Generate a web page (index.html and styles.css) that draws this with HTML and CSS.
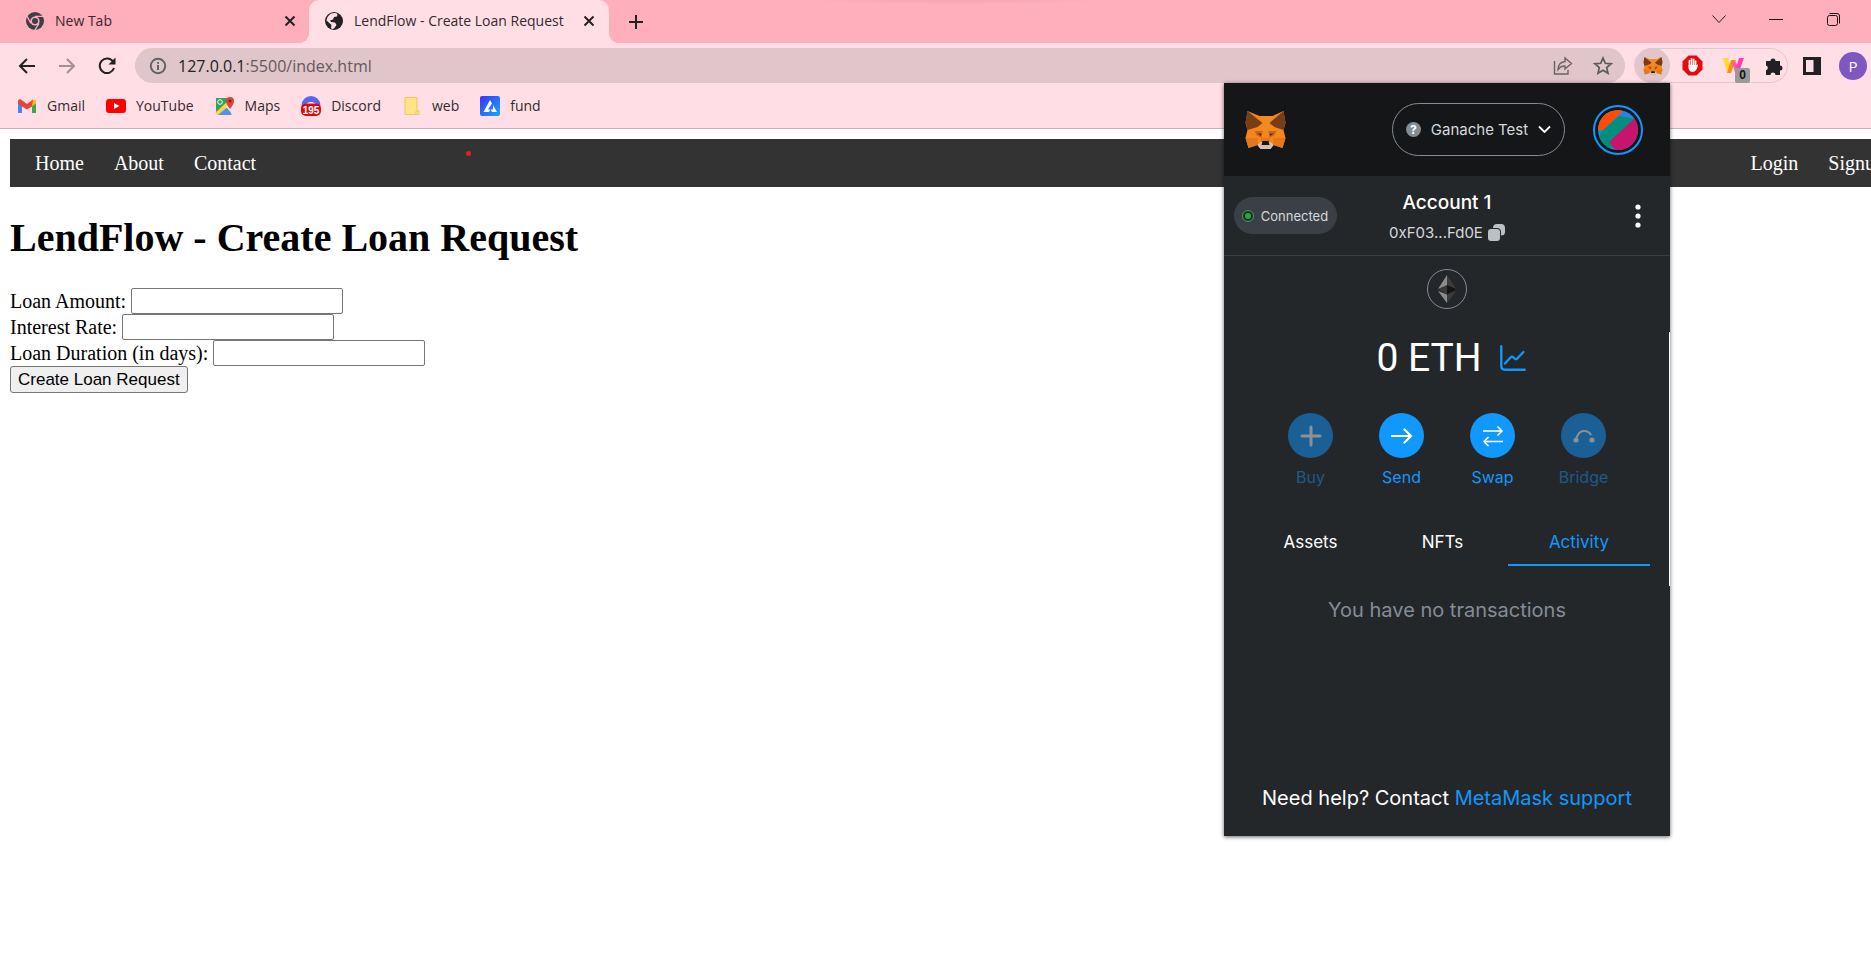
FILE: index.html
```html
<!DOCTYPE html>
<html lang="en">
<head>
<meta charset="utf-8">
<title>LendFlow - Create Loan Request</title>
<link rel="stylesheet" href="styles.css">
</head>
<body>
<svg class="defs" aria-hidden="true">
  <symbol id="fox" viewBox="0 0 40 38">
    <path d="M2 0 L14 5 H27 L38 0 L40 12 L38 19 L40 27 L37 37 L28 34 L25 38 H15 L12 34 L3 37 L0 27 L2 19 L0 12Z" fill="#f6851b"/>
    <path d="M2 0 L17 12 L12 16 L2 19 L0 11Z M38 0 L24 12 L29 16 L38 19 L40 11Z" fill="#763d16"/>
    <path d="M14 5 L17 12 L16 20 H24 L24 12 L27 5Z" fill="#f08a24"/>
    <path d="M9 20 L17 20 L16 27 L11 24Z M31 20 L23 20 L24 27 L29 24Z" fill="#cd6116"/>
    <path d="M0 27 H12 L12 34 L3 37Z M40 27 H28 V34 L37 37Z M16 27 H24 L25 33 H15Z" fill="#e4761b"/>
    <path d="M12 22 L16 23 L15 25Z M28 22 L24 23 L25 25Z" fill="#233447"/>
    <path d="M12 34 L15 31 H25 L28 34 L25 38 H15Z" fill="#d5bfb2"/>
    <path d="M17 30 H23 L24 34 H16Z" fill="#161616"/>
  </symbol>
  <symbol id="cross" viewBox="0 0 12 12"><path d="M1.5 1.5 L10.500 10.500 M10.500 1.500 L1.500 10.500" stroke="#222" stroke-width="2" fill="none"/></symbol>
</svg>

<header class="browser">
  <div class="tabstrip">
    <div class="tab">
      <svg class="favicon" viewBox="0 0 20 20"><circle cx="10" cy="10" r="9" fill="#3c4043"/><circle cx="10" cy="10" r="4.600" fill="#ffaebc"/><circle cx="10" cy="10" r="3" fill="#3c4043"/><path d="M10 5.400 H18.500 M6 12.300 L1.800 5 M14 12.300 L9.600 19.500" stroke="#ffaebc" stroke-width="1.400"/></svg>
      <span class="tab-title">New Tab</span>
      <button class="plain" aria-label="Close tab"><svg class="x"><use href="#cross"/></svg></button>
    </div>
    <div class="tab active">
      <svg class="favicon" viewBox="0 0 20 20"><circle cx="10" cy="10" r="9" fill="#202124"/><path d="M7 2.500 Q12 1.500 13.500 3 L13 5.500 L10 6 L9 8.500 L6 9.500 L7 11 L11 11.500 L12.500 14 L10 17.500 Q8 18.500 7 17 L7.500 14 L2.500 9.500 Q3 5 7 2.500Z" fill="#ffdfe5"/></svg>
      <span class="tab-title">LendFlow - Create Loan Request</span>
      <button class="plain" aria-label="Close tab"><svg class="x"><use href="#cross"/></svg></button>
    </div>
    <button class="plain new-tab" aria-label="New tab"><svg width="16" height="16" viewBox="0 0 16 16"><path d="M8 1 V15 M1 8 H15" stroke="#222" stroke-width="2"/></svg></button>
    <div class="window-controls">
      <button class="plain" aria-label="Search tabs"><svg width="16" height="16" viewBox="0 0 16 16"><path d="M1.500 4.500 L8 11.500 L14.500 4.500" fill="none" stroke="#222"/></svg></button>
      <button class="plain" aria-label="Minimize"><svg width="16" height="16" viewBox="0 0 16 16"><path d="M1 8.500 H15" stroke="#111"/></svg></button>
      <button class="plain" aria-label="Restore"><svg width="16" height="16" viewBox="0 0 16 16" fill="none" stroke="#111"><rect x="2.500" y="4.500" width="10" height="10" rx="2"/><path d="M4.500 2.500 H12 Q14.500 2.500 14.500 5 V12.500"/></svg></button>
    </div>
  </div>

  <div class="toolbar">
    <div class="nav-buttons">
      <button class="plain" aria-label="Back"><svg width="18" height="18" viewBox="0 0 18 18"><path d="M17 9 H2 M9 2 L2 9 L9 16" fill="none" stroke="#222" stroke-width="2"/></svg></button>
      <button class="plain" aria-label="Forward"><svg width="18" height="18" viewBox="0 0 18 18"><path d="M1 9 H16 M9 2 L16 9 L9 16" fill="none" stroke="#a38f94" stroke-width="2"/></svg></button>
      <button class="plain" aria-label="Reload"><svg width="18" height="18" viewBox="0 0 18 18"><path d="M15 4.500 A7.300 7.300 0 1 0 16 11" fill="none" stroke="#222" stroke-width="2"/><path d="M17.500 0.500 V7.500 H10.500Z" fill="#222"/></svg></button>
    </div>
    <div class="omnibox">
      <svg width="18" height="18" viewBox="0 0 18 18" fill="none" stroke="#5f6368" stroke-width="2"><circle cx="9" cy="9" r="7.200"/><path d="M9 8 V13 M9 5 V6.800"/></svg>
      <span class="url"><b>127.0.0.1</b>:5500/index.html</span>
      <button class="plain" aria-label="Share"><svg width="20" height="20" viewBox="0 0 20 20" fill="none" stroke="#6b6266" stroke-width="1.400"><path d="M1.500 5 V18 H15 V14"/><path d="M12 2 L18.500 7.500 L12 13 V10 Q8 9.500 5 13.500 Q5.500 6 12 5.500Z"/></svg></button>
      <button class="plain" aria-label="Bookmark"><svg width="20" height="20" viewBox="0 0 20 20"><path d="M10 2 L12.300 7.300 L18 7.800 L13.700 11.600 L15 17.200 L10 14.200 L5 17.200 L6.300 11.600 L2 7.800 L7.700 7.300Z" fill="none" stroke="#5f5a5e" stroke-width="1.700"/></svg></button>
    </div>
    <div class="extensions">
      <button class="plain ext-fox" aria-label="MetaMask"><svg width="20" height="18"><use href="#fox"/></svg></button>
      <button class="plain" aria-label="Ad blocker"><svg width="21" height="21" viewBox="0 0 21 21"><path d="M6.500 .5 H14.500 L20.500 6.500 V14.500 L14.500 20.500 H6.500 L.5 14.500 V6.500Z" fill="#e9090c"/><path d="M7.400 12 V5.500 M9.500 11 V3.800 M11.600 11 V4.200 M13.600 12 V6" stroke="#fff" stroke-width="1.600" stroke-linecap="round"/><path d="M6.600 10 H14.400 L16 9.500 Q15 16.500 11 17 Q7 17 6.600 13Z" fill="#fff"/></svg></button>
      <button class="plain badge-host" aria-label="Wappalyzer"><svg width="21" height="17" viewBox="0 0 21 17"><path d="M0 1 H5 L8 12 L4 15Z" fill="#ffdd22"/><path d="M8 3 H13 L8 16 H4Z" fill="#ff8c1a"/><path d="M9 5 H13 L16 15 H12Z" fill="#ff5ca8"/><path d="M16 1 H21 L16 15 H12Z" fill="#ff3fae"/></svg><span class="badge">0</span></button>
      <button class="plain" aria-label="Extensions"><svg width="20" height="20" viewBox="0 0 20 20"><path d="M2 5 H6.500 A2.500 2.500 0 1 1 11.500 5 H16 V9.500 A2.500 2.500 0 1 1 16 14.500 V19 H11.500 A2.500 2.500 0 0 0 6.500 19 H2 V14.300 A2.500 2.500 0 0 0 2 9.500Z" fill="#202124"/></svg></button>
    </div>
    <button class="plain" aria-label="Side panel"><svg width="18" height="18" viewBox="0 0 18 18"><path d="M0 0 H18 V18 H0Z M3 3 V15 H10.500 V3Z" fill="#202124" fill-rule="evenodd"/></svg></button>
    <button class="plain profile">P</button>
  </div>

  <nav class="bookmarks" aria-label="Bookmarks">
    <a href="#"><svg width="20" height="20" viewBox="0 0 20 20"><path d="M1 4 V17 H5 V9Z" fill="#4285f4"/><path d="M19 4 V17 H15 V9Z" fill="#34a853"/><path d="M15 5 L19 3.500 V7.500 L15 10.500Z" fill="#fbbc04"/><path d="M1 5 Q1.500 2.500 4 3.500 L10 8 L16 3.500 L15 10.500 L10 13.500 L5 10.500 L1 7.500Z" fill="#ea4335"/></svg>Gmail</a>
    <a href="#"><svg width="20" height="20" viewBox="0 0 20 20"><rect y="3" width="20" height="14" rx="3" fill="#f00"/><path d="M8 7 L13.500 10 L8 13Z" fill="#fff"/></svg>YouTube</a>
    <a href="#"><svg width="20" height="20" viewBox="0 0 20 20"><path d="M1 2 H13 L16 18 H1Z" fill="#34a05a"/><path d="M2 19 L10 11 L17 19Z" fill="#5b8def"/><path d="M0 17 L14 4 L16 8 L3 19Z" fill="#f6d44c"/><path d="M10 10 L17 18 V9Z" fill="#dfe3e8"/><circle cx="5" cy="6" r="2.300" fill="none" stroke="#fff"/><path d="M15 13 Q11 8 11 5 A4 4 0 0 1 19 5 Q19 8 15 13Z" fill="#dc4437"/><circle cx="15" cy="5" r="1.500" fill="#7b231e"/></svg>Maps</a>
    <a href="#"><svg width="20" height="20" viewBox="0 0 20 20"><circle cx="10" cy="9.500" r="9.500" fill="#5865f2"/><path d="M5 8 Q10 4 15 8Z" fill="#fff"/><rect y="7.500" width="20" height="12.500" rx="5" fill="#df0707"/><text x="10" y="17.500" text-anchor="middle" class="count">195</text></svg>Discord</a>
    <a href="#"><svg width="20" height="20" viewBox="0 0 20 20"><path d="M3 1.500 H15 V14 L17 15 V18.500 H3Z" fill="#ffe388" stroke="#edc958"/><path d="M14 18 V15 H17" fill="none" stroke="#edc958"/></svg>web</a>
    <a href="#"><svg width="20" height="20" viewBox="0 0 20 20"><defs><linearGradient id="fundfill" x2="1" y2="1"><stop stop-color="#3d32f5"/><stop offset="1" stop-color="#14aafc"/></linearGradient></defs><rect width="20" height="20" rx="2" fill="url(#fundfill)"/><path d="M10 4 L12 7.500 L8 13.500 H10.500 L9 16 H3.500Z M13 9 L17 16 H12 L10.800 13.500 H13Z" fill="#fff"/></svg>fund</a>
  </nav>

  <section class="wallet" aria-label="MetaMask">
    <div class="wallet-head">
      <svg class="wallet-fox"><use href="#fox"/></svg>
      <button class="plain network"><span class="question">?</span>Ganache Test<svg width="13" height="9" viewBox="0 0 13 9"><path d="M1 1.500 L6.500 7 L12 1.500" fill="none" stroke="#fff" stroke-width="1.800"/></svg></button>
      <button class="plain avatar" aria-label="Account menu"><svg width="40" height="40" viewBox="0 0 40 40"><defs><clipPath id="disc"><circle cx="20" cy="20" r="20"/></clipPath></defs><g clip-path="url(#disc)"><path d="M0 0 H40 V40 H0Z" fill="#2683e0"/><path d="M0 0 H24 V2 L5 20 H0Z" fill="#ff4c05"/><path d="M21 6 L37 9 L12 40 L0 34 L3 22Z" fill="#018e7c"/><path d="M36 9 L11 32 L17 40 H40 V9Z" fill="#c8146c"/></g></svg></button>
    </div>
    <div class="account-bar">
      <button class="plain connected"><i></i>Connected</button>
      <button class="plain account"><strong>Account 1</strong><span>0xF03...Fd0E <svg width="17" height="17" viewBox="0 0 17 17" fill="#bbc0c5"><rect y="5" width="12" height="12" rx="3"/><path d="M5 4 Q5 0 9 0 H13 Q17 0 17 4 V8 Q17 11.500 13 11.500 V8 Q13 4 9 4Z"/></svg></span></button>
      <button class="plain kebab" aria-label="Options"><svg width="6" height="24" viewBox="0 0 6 24" fill="#fff"><circle cx="3" cy="3" r="2.600"/><circle cx="3" cy="12" r="2.600"/><circle cx="3" cy="21" r="2.600"/></svg></button>
    </div>
    <div class="wallet-body">
      <div class="token"><svg width="18" height="28" viewBox="0 0 18 28"><path d="M9 0 L0 14 L9 11Z M9 19.500 L0 16 L9 28Z" fill="#8c8c8c"/><path d="M9 0 L18 14 L9 11Z M9 19.500 L18 16 L9 28Z" fill="#3c3c3b"/><path d="M0 14 L9 10 V19.500Z" fill="#393939"/><path d="M18 14 L9 10 V19.500Z" fill="#141414"/></svg></div>
      <div class="balance">0 ETH<svg width="26" height="26" viewBox="0 0 26 26" fill="none" stroke="#1098fc" stroke-width="2.400" stroke-linecap="round"><path d="M1.300 1.300 V21 Q1.300 24.700 5 24.700 H24.700 M5 18.500 L10.500 12.500 Q12 11 13.500 12.500 L14.500 13.500 Q16 15 17.500 13.200 L23.500 7"/></svg></div>
      <div class="actions">
        <button class="plain" disabled><span class="disc"><svg width="22" height="22" viewBox="0 0 22 22"><path d="M11 2 V20 M2 11 H20" stroke="#8e9091" stroke-width="3" stroke-linecap="round"/></svg></span>Buy</button>
        <button class="plain"><span class="disc"><svg width="22" height="22" viewBox="0 0 22 22"><path d="M1 11 H20 M13.500 4.500 L20 11 L13.500 17.500" fill="none" stroke="#fff" stroke-width="2.200" stroke-linecap="round"/></svg></span>Send</button>
        <button class="plain"><span class="disc"><svg width="22" height="22" viewBox="0 0 22 22" fill="none" stroke="#fff" stroke-width="1.600"><path d="M1 6 H20 M15.500 1.500 L20 6 L15.500 10.500 M21 16.500 H2 M6.500 12 L2 16.500 L6.500 21"/></svg></span>Swap</button>
        <button class="plain" disabled><span class="disc"><svg width="22" height="22" viewBox="0 0 22 22"><path d="M3 15 Q5 6 11 6 Q16 6 18 10" fill="none" stroke="#8e9091" stroke-width="2"/><circle cx="3" cy="15" r="2.600" fill="#8e9091"/><circle cx="19" cy="15" r="2.600" fill="#8e9091"/></svg></span>Bridge</button>
      </div>
      <div class="wallet-tabs">
        <button class="plain">Assets</button>
        <button class="plain">NFTs</button>
        <button class="plain current">Activity</button>
      </div>
      <p class="empty">You have no transactions</p>
      <p class="help">Need help? Contact <a href="#">MetaMask support</a></p>
      <i class="thumb"></i>
    </div>
  </section>
</header>

<main class="page">
  <nav class="site-nav">
    <div><a href="#">Home</a><a href="#">About</a><a href="#">Contact</a></div>
    <div><a href="#">Login</a><a href="#">Signup</a></div>
    <i class="pointer"></i>
  </nav>
  <h1>LendFlow - Create Loan Request</h1>
  <form>
    <div><label for="amount">Loan Amount:</label> <input id="amount" type="text"></div>
    <div><label for="rate">Interest Rate:</label> <input id="rate" type="text"></div>
    <div><label for="days">Loan Duration (in days):</label> <input id="days" type="text"></div>
    <button type="button">Create Loan Request</button>
  </form>
</main>
</body>
</html>
```

FILE: styles.css
```css
* { box-sizing: border-box; }
body { margin: 0; min-height: 100vh; background: #fff; }
svg { display: block; flex: none; }
.defs { position: absolute; width: 0; height: 0; }
.plain { border: 0; padding: 0; background: none; font: inherit; color: inherit; display: flex; align-items: center; justify-content: center; }

/* browser frame */
.browser { position: relative; background: #ffdfe5; border-bottom: 1px solid #c9b3b9; font: 15px/20px "Open Sans", "Noto Sans", sans-serif; color: #35292d; }
.tabstrip { display: flex; align-items: center; height: 43px; background: radial-gradient(ellipse 150px 4px at 51% 0, #f3a3b1, #ffaebc); }
.tab { display: flex; align-items: center; gap: 10px; width: 309px; height: 43px; padding: 0 13px 2px 25px; font-size: 14px; }
.tab.active { position: relative; width: 300px; padding: 0 14px 2px 15px; background: #ffdfe5; border-radius: 10px 10px 0 0; }
.tab.active::before, .tab.active::after { content: ""; position: absolute; bottom: 0; width: 10px; height: 10px; }
.tab.active::before { right: 100%; background: radial-gradient(circle at 0 0, #ffaebc 10px, #ffdfe5 10px); }
.tab.active::after { left: 100%; background: radial-gradient(circle at 100% 0, #ffaebc 10px, #ffdfe5 10px); }
.favicon { width: 20px; height: 20px; }
.tab-title { flex: 1; white-space: nowrap; }
.x { width: 12px; height: 12px; }
.new-tab { margin-left: 19px; }
.window-controls { display: flex; gap: 41px; margin-left: auto; padding: 0 30px 6px 0; }
.toolbar { display: flex; align-items: center; padding: 5px 4px 0 18px; }
.nav-buttons { display: flex; gap: 22px; margin-right: 19px; }
.omnibox { display: flex; flex: 1; align-items: center; gap: 20px; height: 35px; padding: 0 12px 0 14px; border-radius: 18px; background: #e0c5ca; }
.url { flex: 1; margin-left: -9px; font-size: 16px; color: #66595d; }
.url b { font-weight: 400; color: #222; }
.extensions { display: flex; align-items: center; gap: 20px; height: 35px; margin: 0 15px 0 9px; padding-right: 3px; border: 1px solid #e0c9ce; border-radius: 18px; }
.ext-fox { width: 35px; height: 35px; margin-right: -8px; border-radius: 50%; background: #e0c5ca; }
.badge-host { position: relative; }
.badge { position: absolute; left: 12px; top: 11px; width: 15px; border-radius: 2px; background: #9a9a9a; color: #111; font: bold 12px/15px "Liberation Sans", sans-serif; }
.profile { width: 28px; height: 28px; margin-left: 18px; border-radius: 50%; background: #7e57c2; color: #fff; }
.bookmarks { display: flex; gap: 21px; padding: 13px 18px 12px 17px; font-size: 14px; }
.bookmarks a { display: flex; align-items: center; gap: 10px; color: inherit; text-decoration: none; }
.bookmarks svg { height: 20px; }
.count { font: bold 10px "Liberation Sans", sans-serif; fill: #fff; }

/* wallet popup */
.wallet { position: absolute; z-index: 2; top: 83px; right: 201px; width: 446px; background: #24272a; box-shadow: 0 1px 4px #0009; color: #fff; font-family: Inter, sans-serif; font-size: 16px; }
.wallet-head { display: flex; align-items: center; height: 93px; padding: 0 27px 0 21px; background: #141618; }
.wallet-fox { width: 41px; height: 38px; margin-right: auto; }
.network { gap: 10px; width: 173px; height: 53px; margin-right: 28px; border: 1px solid #848c96; border-radius: 27px; font-size: 15px; color: #d6d9dc; }
.question { width: 15px; height: 15px; border-radius: 50%; background: #848c96; color: #fff; font: bold 12px/15px Inter, sans-serif; }
.avatar { width: 50px; height: 50px; border: 2px solid #1098fc; border-radius: 50%; }
.account-bar { display: grid; grid-template-columns: 103px 1fr 103px; align-items: center; height: 80px; padding: 0 10px; border-bottom: 1px solid #3b4046; }
.connected { gap: 8px; height: 37px; border-radius: 19px; background: #3b4046; font-size: 13px; color: #d6d9dc; }
.connected i { width: 10px; height: 10px; border: 2px solid #24272a; border-radius: 50%; background: #28a745; outline: 1px solid #28a745; }
.account { flex-direction: column; gap: 8px; padding-top: 4px; line-height: 22px; }
.account strong { font-size: 19px; font-weight: 500; }
.account span { display: flex; align-items: center; gap: 5px; font-size: 15px; color: #d6d9dc; }
.kebab { justify-self: end; margin-right: 19px; }
.wallet-body { position: relative; padding: 13px 20px 26px; text-align: center; }
.token { display: flex; align-items: center; justify-content: center; width: 40px; height: 40px; margin: 0 auto; border: 1px solid #848c96; border-radius: 50%; }
.balance { display: flex; align-items: center; justify-content: center; gap: 18px; margin: 24px 0 30px 8px; font: 39px/50px Roboto, sans-serif; }
.actions { display: flex; justify-content: center; gap: 31px; color: #1098fc; }
.actions button { flex-direction: column; gap: 9px; width: 60px; }
.actions button:disabled { color: #1d5a8a; }
.disc { display: flex; align-items: center; justify-content: center; width: 45px; height: 45px; border-radius: 50%; background: #1098fc; }
button:disabled .disc { background: #1a6097; }
.wallet-tabs { display: grid; grid-template-columns: 133px 1fr 142px; margin-top: 32px; font-size: 17px; }
.wallet-tabs button { height: 47px; border-bottom: 2px solid transparent; }
.wallet-tabs .current { color: #1098fc; border-color: #1098fc; }
.empty { margin: 32px 0 164px; font-size: 20px; line-height: 24px; color: #848c96; }
.help { margin: 0; font-size: 20px; line-height: 24px; }
.help a { color: #1098fc; text-decoration: none; }
.thumb { position: absolute; top: 76px; right: 0; width: 1px; height: 254px; background: #fff; }

/* loan page */
.page { padding: 10px; overflow-x: hidden; font: 20px/23px "Liberation Serif", serif; color: #000; }
.site-nav { position: relative; display: flex; justify-content: space-between; margin-right: -50px; padding: 13px 26px 12px 25px; background: #333; }
.site-nav div { display: flex; gap: 30px; }
.site-nav a { color: #fff; text-decoration: none; }
.pointer { position: absolute; left: 456px; top: 12px; width: 5px; height: 5px; border-radius: 50%; background: #e81c23; }
.page h1 { margin: 28px 0 27px; font-size: 40px; line-height: 46px; }
.page form div { display: flex; align-items: center; gap: 5px; height: 26px; }
.page input { width: 212px; height: 26px; border: 1px solid #767676; border-radius: 2px; font: 17px "Liberation Sans", sans-serif; }
.page form button { height: 27px; padding: 0 7px; border: 1px solid #767676; border-radius: 3px; background: #efefef; font: 17px/20px "Liberation Sans", sans-serif; color: #000; }
```
